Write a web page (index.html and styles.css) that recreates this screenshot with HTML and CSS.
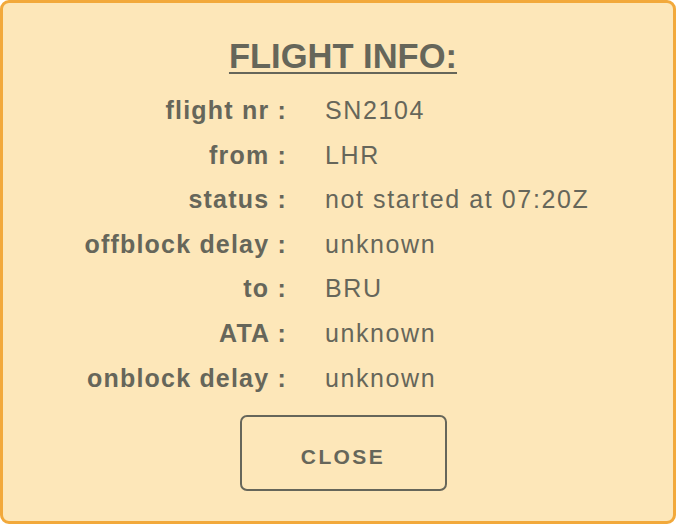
FILE: index.html
```html
<!DOCTYPE html>
<html>
<head>
<meta charset="utf-8">
<link rel="stylesheet" href="styles.css">
</head>
<body>
<div class="dialog">
  <h1 class="title">FLIGHT INFO:</h1>
  <div class="info">
    <div class="label">flight nr :</div><div class="value">SN2104</div>
    <div class="label">from :</div><div class="value">LHR</div>
    <div class="label">status :</div><div class="value">not started at 07:20Z</div>
    <div class="label">offblock delay :</div><div class="value">unknown</div>
    <div class="label">to :</div><div class="value">BRU</div>
    <div class="label">ATA :</div><div class="value">unknown</div>
    <div class="label">onblock delay :</div><div class="value">unknown</div>
  </div>
  <div class="actions">
    <button class="close">CLOSE</button>
  </div>
</div>
</body>
</html>
```
FILE: styles.css
```css
html, body {
  margin: 0;
  padding: 0;
  background: #ffffff;
}
body {
  font-family: "Liberation Sans", Arial, sans-serif;
  color: #66665a;
}
.dialog {
  box-sizing: border-box;
  width: 676px;
  height: 524px;
  background: #fde7b9;
  border: 3px solid #f2a93b;
  border-radius: 9px;
  display: flex;
  flex-direction: column;
  align-items: center;
  padding: 31px 0 0 10px;
}
.title {
  margin: 0;
  font-size: 34.5px;
  font-weight: bold;
  text-decoration: underline;
  text-decoration-thickness: 2px;
  text-underline-offset: 4px;
  line-height: 44px;
}
.info {
  margin-top: 10px;
  display: grid;
  grid-template-columns: 274px 1fr;
  column-gap: 38px;
  width: 100%;
}
.label, .value {
  font-size: 25px;
  line-height: 44.6px;
}
.label {
  font-weight: bold;
  text-align: right;
  letter-spacing: 1.2px;
}
.value {
  letter-spacing: 1.6px;
}
.actions {
  margin-top: 15px;
}
.close {
  box-sizing: border-box;
  width: 207px;
  height: 76px;
  background: transparent;
  border: 2px solid #66665a;
  border-radius: 7px;
  font-family: "Liberation Sans", Arial, sans-serif;
  font-weight: bold;
  font-size: 21px;
  letter-spacing: 2.4px;
  color: #66665a;
  padding: 7px 0 0 0;
}
```
